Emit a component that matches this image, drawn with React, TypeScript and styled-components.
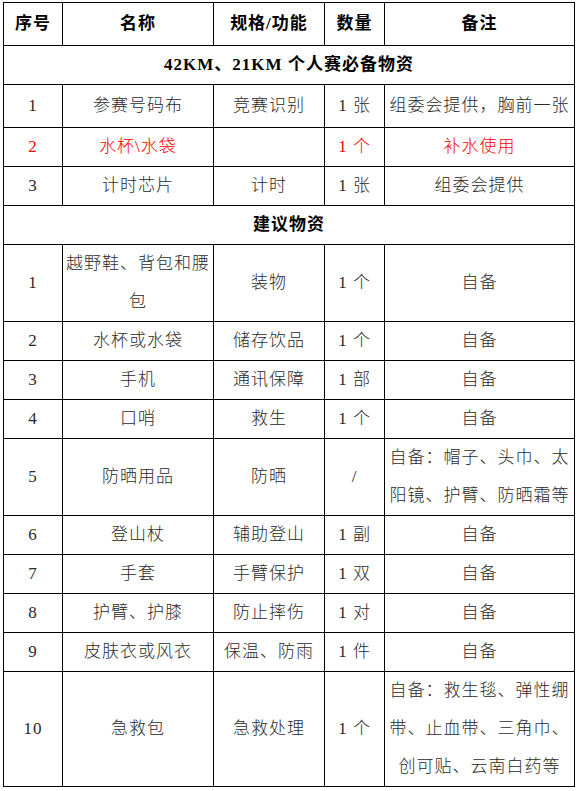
import React from 'react';
import styled, { createGlobalStyle } from 'styled-components';

type Item = {
    kind: 'item';
    no: string;
    name: string;
    spec: string;
    qty: string;
    note: string;
    height: number;
    red?: boolean;
};

type Section = {
    kind: 'section';
    title: string;
    height: number;
};

type RowData = Item | Section;

const columns = [
    { title: '序号', width: 59 },
    { title: '名称', width: 151 },
    { title: '规格/功能', width: 111 },
    { title: '数量', width: 60 },
    { title: '备注', width: 190 },
];

// row heights are the distance between grid lines minus the shared border
const rows: Array<RowData> = [
    { kind: 'section', title: '42KM、21KM 个人赛必备物资', height: 38 },
    { kind: 'item', no: '1', name: '参赛号码布', spec: '竞赛识别', qty: '1 张', note: '组委会提供，胸前一张', height: 43 },
    { kind: 'item', no: '2', name: '水杯\\水袋', spec: '', qty: '1 个', note: '补水使用', height: 38, red: true },
    { kind: 'item', no: '3', name: '计时芯片', spec: '计时', qty: '1 张', note: '组委会提供', height: 38 },
    { kind: 'section', title: '建议物资', height: 38 },
    { kind: 'item', no: '1', name: '越野鞋、背包和腰包', spec: '装物', qty: '1 个', note: '自备', height: 76 },
    { kind: 'item', no: '2', name: '水杯或水袋', spec: '储存饮品', qty: '1 个', note: '自备', height: 38 },
    { kind: 'item', no: '3', name: '手机', spec: '通讯保障', qty: '1 部', note: '自备', height: 38 },
    { kind: 'item', no: '4', name: '口哨', spec: '救生', qty: '1 个', note: '自备', height: 38 },
    { kind: 'item', no: '5', name: '防晒用品', spec: '防晒', qty: '/', note: '自备：帽子、头巾、太阳镜、护臂、防晒霜等', height: 76 },
    { kind: 'item', no: '6', name: '登山杖', spec: '辅助登山', qty: '1 副', note: '自备', height: 38 },
    { kind: 'item', no: '7', name: '手套', spec: '手臂保护', qty: '1 双', note: '自备', height: 38 },
    { kind: 'item', no: '8', name: '护臂、护膝', spec: '防止摔伤', qty: '1 对', note: '自备', height: 38 },
    { kind: 'item', no: '9', name: '皮肤衣或风衣', spec: '保温、防雨', qty: '1 件', note: '自备', height: 38 },
    { kind: 'item', no: '10', name: '急救包', spec: '急救处理', qty: '1 个', note: '自备：救生毯、弹性绷带、止血带、三角巾、创可贴、云南白药等', height: 115 },
];

const App = () => {
    return (
        <>
            <GlobalStyle />
            <Table>
                <colgroup>
                    {columns.map((column, index) => (
                        <Col key={index} $width={column.width} />
                    ))}
                </colgroup>
                <thead>
                    <Row $height={43}>
                        {columns.map((column, index) => (
                            <HeaderCell key={index}>{column.title}</HeaderCell>
                        ))}
                    </Row>
                </thead>
                <tbody>
                    {rows.map((row, index) =>
                        row.kind === 'section' ? (
                            <Row key={index} $height={row.height}>
                                <SectionCell colSpan={5}>{row.title}</SectionCell>
                            </Row>
                        ) : (
                            <Row key={index} $height={row.height}>
                                <Cell $red={row.red}>{row.no}</Cell>
                                <Cell $red={row.red}>{row.name}</Cell>
                                <Cell $red={row.red}>{row.spec}</Cell>
                                <Cell $red={row.red}>{row.qty}</Cell>
                                <Cell $red={row.red}>{row.note}</Cell>
                            </Row>
                        )
                    )}
                </tbody>
            </Table>
        </>
    );
};

const GlobalStyle = createGlobalStyle`
    body {
        margin: 0;
        background: #ffffff;
        font-family: "Liberation Serif", "Noto Sans CJK SC", serif;
    }
`;

const Table = styled.table`
    border-collapse: collapse;
    table-layout: fixed;
    width: 571px;
    margin: 2px 0 0 3px;
`;

const Col = styled.col<{ $width: number }>`
    width: ${(props) => props.$width}px;
`;

const Row = styled.tr<{ $height: number }>`
    height: ${(props) => props.$height}px;
`;

const Cell = styled.td<{ $red?: boolean }>`
    border: 1px solid #000000;
    padding: 0 2px;
    text-align: center;
    vertical-align: middle;
    font-size: 17px;
    letter-spacing: 1px;
    line-height: 38px;
    font-weight: 300;
    color: ${(props) => (props.$red ? '#ff0000' : '#2a2a2a')};
    word-break: break-all;
`;

const HeaderCell = styled.th`
    border: 1px solid #000000;
    padding: 0 2px;
    text-align: center;
    vertical-align: middle;
    font-size: 17px;
    letter-spacing: 1px;
    line-height: 38px;
    font-weight: 700;
    color: #000000;
`;

const SectionCell = styled(HeaderCell).attrs({ as: 'td' })``;

export default App;
